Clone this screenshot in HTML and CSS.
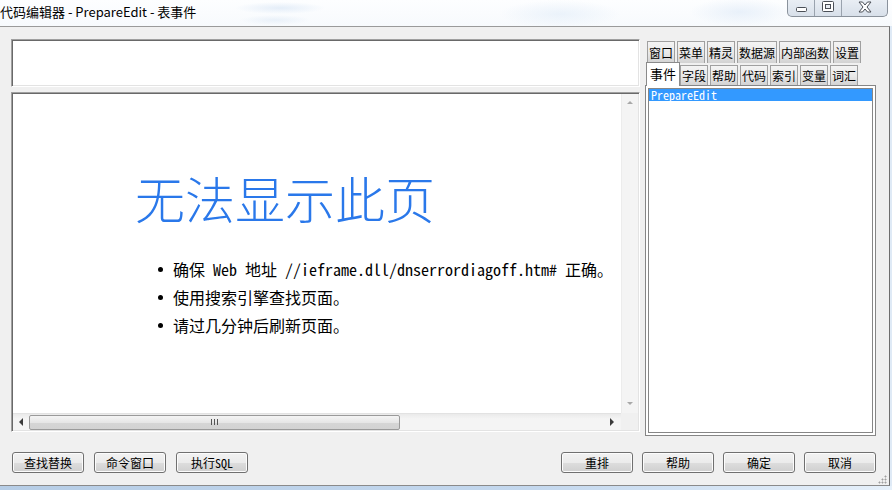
FILE: index.html
```html
<!DOCTYPE html>
<html lang="zh-CN">
<head>
<meta charset="utf-8">
<title>代码编辑器 - PrepareEdit - 表事件</title>
<link rel="stylesheet" href="styles.css">
</head>
<body>
<div class="screen">
  <div class="titlebar">
    <span class="title">代码编辑器 - PrepareEdit - 表事件</span>
    <div class="controls">
      <div class="ctl ctl-min">
        <svg width="11" height="5" viewBox="0 0 11 5"><rect x="0.5" y="0.5" width="10" height="4" rx="1" fill="#fff" stroke="#4a4f57"/></svg>
      </div>
      <div class="ctl ctl-max">
        <svg width="12" height="11" viewBox="0 0 12 11"><rect x="0.5" y="0.5" width="11" height="10" rx="1" fill="#fff" stroke="#4a4f57"/><rect x="3.5" y="3.5" width="5" height="4" fill="#e7ecf2" stroke="#4a4f57"/></svg>
      </div>
      <div class="ctl ctl-close">
        <svg width="14" height="12" viewBox="0 0 14 12"><path d="M1 1 H4.5 L7 4 L9.5 1 H13 L9 6 L13 11 H9.5 L7 8 L4.5 11 H1 L5 6 Z" fill="#fff" stroke="#4a4f57" stroke-linejoin="round"/></svg>
      </div>
    </div>
  </div>
  <div class="frame">
    <div class="main">
      <div class="left">
        <div class="topbox"></div>
        <div class="editor">
          <div class="view-row">
            <div class="page">
              <h1 class="err-title">无法显示此页</h1>
              <ul class="err-list">
                <li><span class="dot"></span><span>确保 Web 地址 //ieframe.dll/dnserrordiagoff.htm# 正确。</span></li>
                <li><span class="dot"></span><span>使用搜索引擎查找页面。</span></li>
                <li><span class="dot"></span><span>请过几分钟后刷新页面。</span></li>
              </ul>
            </div>
            <div class="vscroll">
              <span class="arr arr-up"></span>
              <span class="arr arr-down"></span>
            </div>
          </div>
          <div class="hscroll-row">
            <div class="hscroll">
              <span class="arr arr-left"></span>
              <div class="track">
                <div class="thumb"><span class="grip-lines"></span></div>
              </div>
              <span class="arr arr-right"></span>
            </div>
            <div class="corner"></div>
          </div>
        </div>
      </div>
      <div class="right">
        <div class="tabrow row1">
          <span class="tab">窗口</span>
          <span class="tab">菜单</span>
          <span class="tab">精灵</span>
          <span class="tab">数据源</span>
          <span class="tab">内部函数</span>
          <span class="tab">设置</span>
        </div>
        <div class="tabrow row2">
          <span class="tab active">事件</span>
          <span class="tab">字段</span>
          <span class="tab">帮助</span>
          <span class="tab">代码</span>
          <span class="tab">索引</span>
          <span class="tab">变量</span>
          <span class="tab">词汇</span>
        </div>
        <div class="list">
          <div class="list-inner">
            <div class="item selected">PrepareEdit</div>
          </div>
        </div>
      </div>
    </div>
    <div class="footer">
      <div class="btn-group">
        <button class="btn">查找替换</button>
        <button class="btn">命令窗口</button>
        <button class="btn">执行SQL</button>
      </div>
      <div class="btn-group right-group">
        <button class="btn">重排</button>
        <button class="btn">帮助</button>
        <button class="btn">确定</button>
        <button class="btn">取消</button>
      </div>
    </div>
    <div class="sizegrip"></div>
  </div>
  <div class="taskbar"></div>
</div>
</body>
</html>
```
FILE: styles.css
```css
* { box-sizing: border-box; }
html, body { margin: 0; padding: 0; }
body {
  width: 892px;
  height: 490px;
  overflow: hidden;
  background: #dfeaf6;
  font-family: "Noto Sans CJK SC", sans-serif;
}
.screen { width: 892px; height: 490px; position: relative; }

/* title bar */
.titlebar {
  height: 26px;
  display: flex;
  align-items: flex-start;
  position: relative;
  background:
    radial-gradient(ellipse 45px 6px at 280px 8px, rgba(205,222,242,0.5), rgba(255,255,255,0) 100%),
    radial-gradient(ellipse 35px 5px at 275px 20px, rgba(210,225,242,0.4), rgba(255,255,255,0) 100%),
    radial-gradient(ellipse 60px 14px at 560px 14px, rgba(220,233,247,0.5), rgba(255,255,255,0) 100%),
    radial-gradient(ellipse 50px 14px at 740px 12px, rgba(215,229,245,0.5), rgba(255,255,255,0) 100%),
    linear-gradient(#fdfeff, #f7fafd);
}
.title {
  font-size: 13px;
  line-height: 17px;
  padding-top: 3px;
  color: #000;
  white-space: nowrap;
}
.controls {
  position: absolute;
  left: 787px;
  top: 0;
  display: flex;
  height: 17px;
  border: 1px solid #8a929c;
  border-top: none;
  border-radius: 0 0 5px 5px;
  overflow: hidden;
  background: linear-gradient(#e9eef4, #d8e0ea);
}
.ctl { display: flex; align-items: center; justify-content: center; }
.ctl-min { width: 27px; border-right: 1px solid #9aa3ae; align-items: flex-end; padding-bottom: 4px; }
.ctl-max { width: 27px; border-right: 1px solid #9aa3ae; padding-bottom: 3px; }
.ctl-close { width: 45px; padding-bottom: 3px; }

/* frame */
.frame {
  width: 890px;
  height: 460px;
  background: #f0f0f0;
  border-top: 1px solid #9a9a9a;
  border-right: 1px solid #6e6e6e;
  border-bottom: 1px solid #8a8a8a;
  position: relative;
}
.main {
  display: flex;
  height: 407px;
  padding: 12px 0 0 11px;
}
.left { width: 629px; display: flex; flex-direction: column; }
.topbox {
  height: 48px;
  background: #fff;
  border-top: 1px solid #a0a0a0;
  border-left: 1px solid #a0a0a0;
  border-right: 1px solid #fff;
  border-bottom: 1px solid #fff;
  box-shadow: inset 1px 1px 0 #696969, inset -1px -1px 0 #e3e3e3;
  margin-bottom: 5px;
}
.editor {
  height: 340px;
  background: #fff;
  border-top: 1px solid #a0a0a0;
  border-left: 1px solid #a0a0a0;
  border-right: 1px solid #fff;
  border-bottom: 1px solid #fff;
  box-shadow: inset 1px 1px 0 #696969, inset -1px -1px 0 #e3e3e3;
  padding: 1px 1px 1px 1px;
  display: flex;
  flex-direction: column;
}
.view-row { display: flex; flex: 1; min-height: 0; }
.page { flex: 1; padding-left: 122px; }
.err-title {
  margin: 78px 0 0 0;
  font-size: 50px;
  line-height: 50px;
  font-weight: 300;
  color: #2a78ea;
  letter-spacing: 0;
  white-space: nowrap;
}
.err-list {
  list-style: none;
  margin: 33px 0 0 0;
  padding: 0 0 0 23px;
  font-family: "Noto Sans Mono CJK SC", "Noto Sans CJK SC", monospace;
  font-size: 16px;
  line-height: 28px;
  color: #000;
}
.err-list li { display: flex; align-items: center; white-space: nowrap; }
.dot {
  width: 5px; height: 5px; border-radius: 50%;
  background: #000;
  margin-right: 10px;
  flex: none;
}
.vscroll {
  width: 17px;
  background: #f4f4f4;
  border-left: 1px solid #ececec;
  display: flex;
  flex-direction: column;
  justify-content: space-between;
  align-items: center;
  padding: 7px 0 8px;
}
.arr { width: 0; height: 0; display: block; }
.arr-up { border-left: 3px solid transparent; border-right: 3px solid transparent; border-bottom: 3px solid #a8a8a8; }
.arr-down { border-left: 3px solid transparent; border-right: 3px solid transparent; border-top: 3px solid #a8a8a8; }
.arr-left { border-top: 4px solid transparent; border-bottom: 4px solid transparent; border-right: 4px solid #3a3a3a; margin: 0 6px 0 6px; }
.arr-right { border-top: 4px solid transparent; border-bottom: 4px solid transparent; border-left: 4px solid #3a3a3a; margin: 0 7px 0 5px; }
.hscroll-row { display: flex; height: 17px; }
.hscroll {
  flex: 1;
  display: flex;
  align-items: center;
  background: linear-gradient(#eaeaea, #f4f4f4 30%, #f4f4f4);
  border-top: 1px solid #e2e2e2;
}
.track { flex: 1; height: 100%; display: flex; align-items: center; }
.thumb {
  width: 371px;
  height: 15px;
  border: 1px solid #9a9a9a;
  border-radius: 2px;
  background: linear-gradient(#f4f4f4, #e6e6e6 50%, #d6d6d6 51%, #d2d2d2);
  display: flex;
  align-items: center;
  justify-content: center;
}
.grip-lines {
  width: 7px;
  height: 6px;
  background: repeating-linear-gradient(90deg, #555 0 1px, transparent 1px 3px);
}
.corner { width: 17px; background: #f0f0f0; }

/* right panel */
.right { width: 231px; margin-left: 5px; display: flex; flex-direction: column; }
.tabrow { display: flex; font-size: 12px; color: #000; }
.row1 { height: 22px; margin-top: 2px; padding-left: 2px; gap: 2px; }
.row2 { height: 22px; align-items: flex-end; padding-left: 1px; gap: 2px; position: relative; z-index: 1; }
.tab {
  display: flex;
  align-items: center;
  justify-content: center;
  padding: 0 1px;
  height: 22px;
  border: 1px solid #a0a0a0;
  border-bottom: none;
  background: linear-gradient(#f4f4f4, #e8e8e8 55%, #d2d2d2);
  line-height: 1;
  white-space: nowrap;
}
.row2 .tab { height: 20px; }
.row2 .tab.active {
  height: 24px;
  margin-bottom: -1px;
  background: #fff;
  border-color: #8a8a8a;
  font-size: 13px;
  padding: 0 3px 2px;
  margin-right: -2px;
}
.list {
  flex: 1;
  margin-bottom: -2px;
  background: #fff;
  border: 1px solid #868686;
  padding: 2px;
}
.list-inner { height: 100%; border: 1px solid #868686; }
.item {
  height: 12px;
  font-family: "Noto Sans Mono CJK SC", "Liberation Mono", monospace;
  font-size: 12px;
  line-height: 12px;
  padding-left: 2px;
  white-space: nowrap;
}
.item.selected { background: #3399ff; color: #fff; }

/* footer */
.footer {
  display: flex;
  justify-content: space-between;
  margin-top: 18px;
  padding: 0 13px 0 12px;
}
.btn-group { display: flex; gap: 10px; }
.right-group { gap: 9px; }
.btn {
  width: 72px;
  height: 21px;
  padding: 0;
  border: 1px solid #707070;
  border-radius: 3px;
  background: linear-gradient(#f2f2f2, #ebebeb 50%, #dddddd 51%, #cfcfcf);
  box-shadow: inset 0 0 0 1px #fcfcfc;
  font-family: "Noto Sans Mono CJK SC", "Noto Sans CJK SC", sans-serif;
  font-size: 12px;
  line-height: 19px;
  color: #000;
}
.sizegrip {
  position: absolute;
  right: 2px;
  bottom: 1px;
  width: 9px;
  height: 9px;
  background:
    radial-gradient(circle at 7.5px 7.5px, #a0a0a0 0.8px, transparent 1.2px),
    radial-gradient(circle at 4.5px 7.5px, #a0a0a0 0.8px, transparent 1.2px),
    radial-gradient(circle at 1.5px 7.5px, #a0a0a0 0.8px, transparent 1.2px),
    radial-gradient(circle at 7.5px 4.5px, #a0a0a0 0.8px, transparent 1.2px),
    radial-gradient(circle at 4.5px 4.5px, #a0a0a0 0.8px, transparent 1.2px),
    radial-gradient(circle at 7.5px 1.5px, #a0a0a0 0.8px, transparent 1.2px);
}
.taskbar {
  height: 4px;
  background: linear-gradient(90deg, #b6cde6, #c4d8ee 60%, #e6f0fa);
}
```
